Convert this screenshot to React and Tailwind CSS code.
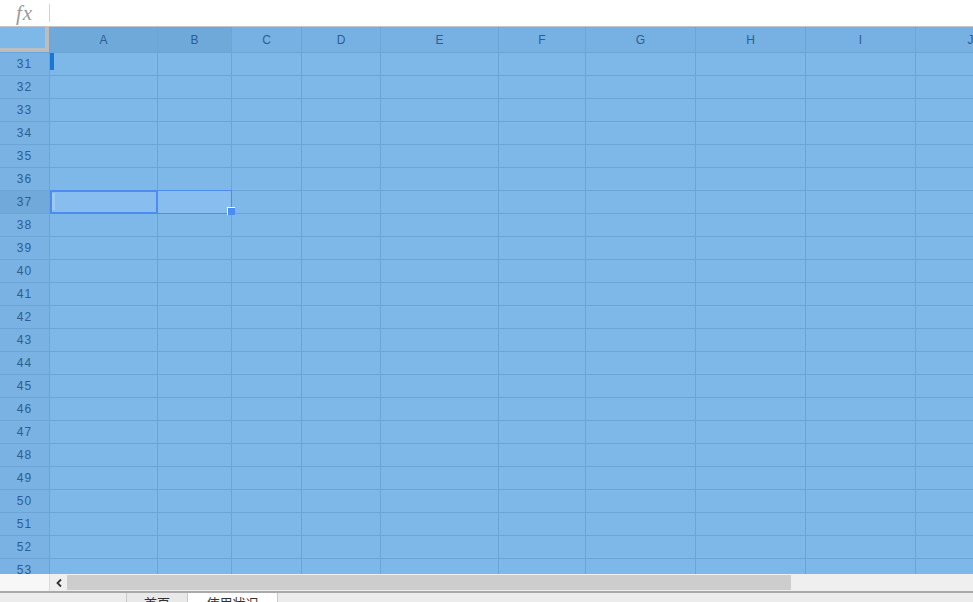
import React from "react";

const cols = [
  { l: "A", w: 108 },
  { l: "B", w: 74 },
  { l: "C", w: 70 },
  { l: "D", w: 79 },
  { l: "E", w: 118 },
  { l: "F", w: 87 },
  { l: "G", w: 110 },
  { l: "H", w: 110 },
  { l: "I", w: 110 },
  { l: "J", w: 110 },
];
const rows = Array.from({ length: 23 }, (_, i) => 31 + i);

export default function App() {
  return (
    <div
      className="w-[973px] h-[602px] overflow-hidden bg-white flex flex-col"
      style={{ fontFamily: '"Liberation Sans", Arial, "Noto Sans CJK SC", sans-serif' }}
    >
      {/* formula bar */}
      <div className="h-[27px] shrink-0 flex items-start border-b border-[#c4c4c4] bg-white">
        <div className="w-[49px] h-[26px] flex items-center justify-center">
          <span
            className="text-[21px] italic text-[#9a9a9a] leading-[22px] tracking-[1px]"
            style={{ fontFamily: '"Liberation Serif", "DejaVu Serif", serif' }}
          >
            fx
          </span>
        </div>
        <div className="w-px h-[18px] mt-[4px] bg-[#d4d4d4]" />
      </div>

      {/* sheet */}
      <div className="relative h-[547px] shrink-0 overflow-hidden bg-[#7eb8e9]">
        {/* header row */}
        <div className="flex h-[26px]">
          <div className="w-[50px] shrink-0 h-[26px] flex border-r border-b border-[#6ba5d8]">
            <div className="w-[49px] h-[25px] bg-[#7eb8e9] border-r-4 border-b-4 border-[#bdbdbd]" />
          </div>
          {cols.map((c, i) => (
            <div
              key={c.l}
              style={{ width: c.w }}
              className={`shrink-0 h-[26px] border-r border-b border-[#6ba5d8] flex items-center justify-center text-[12px] text-[#2c5e92] ${
                i < 2 ? "bg-[#6fa9da]" : "bg-[#77b1e3]"
              }`}
            >
              {c.l}
            </div>
          ))}
        </div>
        {rows.map((r) => (
          <div key={r} className="flex h-[23px]">
            <div
              className={`w-[50px] shrink-0 h-[23px] border-r border-b border-[#6ba5d8] flex items-center justify-center text-[12px] tracking-[1px] text-[#2c5e92] ${
                r === 37 ? "bg-[#70a9da]" : "bg-[#79b2e3]"
              }`}
            >
              {r}
            </div>
            {cols.map((c) => (
              <div
                key={c.l}
                style={{ width: c.w }}
                className="shrink-0 h-[23px] border-r border-b border-[#6ba5d8] bg-[#7eb8e9]"
              />
            ))}
          </div>
        ))}

        {/* row 31 indicator */}
        <div className="absolute left-[50px] top-[26px] w-[4px] h-[17px] bg-[#1a76d2]" />

        {/* selection A37:B37 */}
        <div className="absolute left-[50px] top-[163px] w-[182px] h-[24px] border border-[#4a8cf0] bg-[#88bdef]" />
        <div className="absolute left-[50px] top-[163px] w-[108px] h-[24px] border-2 border-[#4a8cf0]" />
        <div className="absolute left-[52px] top-[166px] w-[3px] h-[17px] bg-[#9dc9f3]" />
        <div className="absolute left-[227px] top-[180px] w-[8px] h-[8px] bg-[#4a8cf0] border-l border-t border-white" />
      </div>

      {/* horizontal scrollbar */}
      <div className="h-[17px] shrink-0 flex bg-[#efefef]">
        <div className="w-[50px] h-[17px] bg-[#f7f7f7] border-r border-[#dcdcdc]" />
        <div className="w-[17px] h-[17px] flex items-center justify-center">
          <svg width="8" height="10" viewBox="0 0 8 10">
            <path d="M6 1.5 L2.5 5 L6 8.5" stroke="#333" strokeWidth="1.8" fill="none" />
          </svg>
        </div>
        <div className="w-[724px] h-[15px] mt-[1px] bg-[#cdcdcd]" />
      </div>

      {/* tabs */}
      <div className="h-[11px] shrink-0 flex border-t-2 border-[#a9a9a9] bg-[#ececec] overflow-hidden">
        <div className="w-[126px]" />
        <div className="w-[62px] border-l border-r border-[#c9c9c9] bg-[#e9e9e9] flex justify-center pt-[3px] text-[13px] text-[#333] leading-[16px]">
          首页
        </div>
        <div className="w-[90px] border-r border-[#c9c9c9] bg-white flex justify-center pt-[3px] text-[13px] text-[#333] leading-[16px]">
          使用状况
        </div>
      </div>
    </div>
  );
}
